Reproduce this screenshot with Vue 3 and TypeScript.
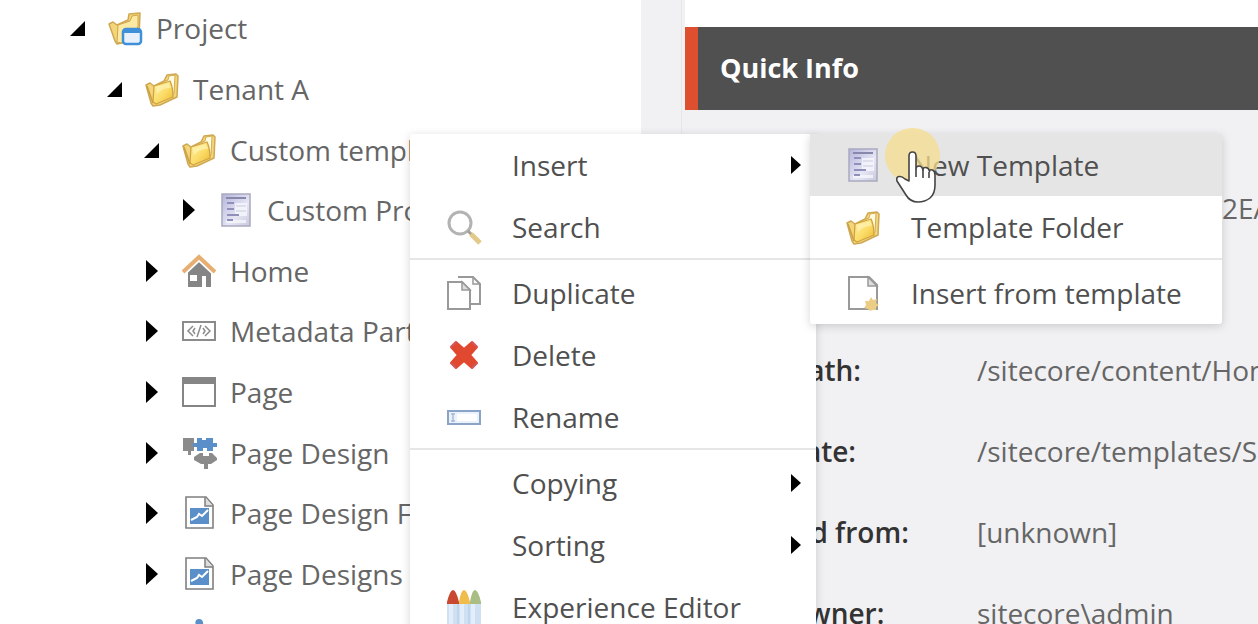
<script setup lang="ts">
interface TreeNode {
  label: string
  depth: number
  icon: string
  open?: boolean
}

interface MenuItem {
  label: string
  icon?: string
  submenu?: boolean
  active?: boolean
}

const nodes: TreeNode[] = [
  { label: 'Project', depth: 0, icon: 'folder-app', open: true },
  { label: 'Tenant A', depth: 1, icon: 'folder', open: true },
  { label: 'Custom templates', depth: 2, icon: 'folder', open: true },
  { label: 'Custom Product', depth: 3, icon: 'template' },
  { label: 'Home', depth: 2, icon: 'home' },
  { label: 'Metadata Partial', depth: 2, icon: 'code' },
  { label: 'Page', depth: 2, icon: 'window' },
  { label: 'Page Design', depth: 2, icon: 'puzzle' },
  { label: 'Page Design Folder', depth: 2, icon: 'design' },
  { label: 'Page Designs', depth: 2, icon: 'design' },
  { label: 'Partial Design', depth: 2, icon: 'piece' },
]

const menuGroups: MenuItem[][] = [
  [{ label: 'Insert', submenu: true }, { label: 'Search', icon: 'search' }],
  [
    { label: 'Duplicate', icon: 'duplicate' },
    { label: 'Delete', icon: 'delete' },
    { label: 'Rename', icon: 'rename' },
  ],
  [
    { label: 'Copying', submenu: true },
    { label: 'Sorting', submenu: true },
    { label: 'Experience Editor', icon: 'crayons' },
  ],
]

const insertGroups: MenuItem[][] = [
  [
    { label: 'New Template', icon: 'template', active: true },
    { label: 'Template Folder', icon: 'folder' },
  ],
  [{ label: 'Insert from template', icon: 'newdoc' }],
]

const menus = [
  { name: 'context', label: 'Item actions', groups: menuGroups },
  { name: 'insert', label: 'Insert', groups: insertGroups },
]

const info = [
  ['Item ID:', '{110D559F-DEA5-42EA-9C1C-8A5DF7E70EF9}'],
  ['Item name:', 'Home'],
  ['Item path:', '/sitecore/content/Home'],
  ['Template:', '/sitecore/templates/Sample/Sample Item'],
  ['Created from:', '[unknown]'],
  ['Item owner:', 'sitecore\\admin'],
]
</script>

<template>
  <svg class="sprites" aria-hidden="true">
    <defs>
      <linearGradient id="gold" x1="0" y1="0" x2="1" y2="1">
        <stop offset="0" stop-color="#fff0a6" />
        <stop offset="0.55" stop-color="#fbdc68" />
        <stop offset="1" stop-color="#e9b92e" />
      </linearGradient>
      <linearGradient id="sheet" x1="0" y1="0" x2="1" y2="1">
        <stop offset="0" stop-color="#b4b4dc" />
        <stop offset="0.6" stop-color="#e6e6f4" />
        <stop offset="1" stop-color="#c8c8dc" />
      </linearGradient>
    </defs>
    <symbol id="folder" viewBox="0 0 36 36">
      <path d="M2 14l4-2 4 3 10-5 3-6 9-1 2 2-1 21-17 8-7 1-2-3z" fill="#f3d67a" stroke="#cfa854" stroke-width="1.5" stroke-linejoin="round" />
      <path d="M21 10l3-1 1-4 6-1-1 19-4 3z" fill="#fffbe4" stroke="#d5ad4c" />
      <path d="M10 15l16-5q3 6 3 16l-17 7-3-2z" fill="url(#gold)" stroke="#d0a343" stroke-width="1.3" stroke-linejoin="round" />
      <path d="M12 16l13-4 2 5q-8-1-14 6z" fill="#fff4b5" opacity=".7" />
      <path d="M3 15l6 17" stroke="#cda044" stroke-width="1.5" />
    </symbol>
    <symbol id="folder-app" viewBox="0 0 36 36">
      <path d="M2 14l4-2 4 3 11-5 1-6 11-1-1 24-17 6-5 1-2-3z" fill="#f3d67a" stroke="#cfa854" stroke-width="1.5" stroke-linejoin="round" />
      <path d="M11 15l12-4 2-5 6-1v12L14 33l-4-1z" fill="#fbe9a4" stroke="#d0a64a" />
      <rect x="16" y="19" width="18" height="15" rx="3" fill="#e8f1fb" stroke="#3f8fd9" stroke-width="2.5" />
      <path d="M16 19h18v4H16z" fill="#3f8fd9" />
    </symbol>
    <symbol id="template" viewBox="0 0 36 36">
      <rect x="4" y="2" width="28" height="32" fill="url(#sheet)" stroke="#a9a9c0" stroke-width="1.5" />
      <path d="M8 6h20" stroke="#8888ac" stroke-width="2" />
      <path d="M17 11h12v13H17zM8 28h20v3H8z" fill="#f6f6fc" opacity=".8" />
      <path d="M9 11h7M9 17h7M9 23h12M9 28h6" stroke="#9090ba" stroke-width="2" />
      <path d="M18 14h10M18 19h10" stroke="#c9c9dd" />
    </symbol>
    <symbol id="home" viewBox="0 0 36 36">
      <path d="M7 17L18 8l12 10v16h-5V23h-4v11H7z" fill="#858585" />
      <path d="M9 22h7v6H9z" fill="#fff" />
      <path d="M2 20L18 5l16 15" fill="none" stroke="#fff" stroke-width="6" />
      <path d="M2 19L18 4l16 15" fill="none" stroke="#e7ae72" stroke-width="4" />
    </symbol>
    <symbol id="code" viewBox="0 0 36 36">
      <rect x="2" y="9" width="32" height="18" fill="#fff" stroke="#8b8b8b" stroke-width="2" />
      <path d="M12 13l-5 5 5 5M24 13l5 5-5 5M20 12l-4 12M14 15l-2 3 2 3M22 15l2 3-2 3" fill="none" stroke="#8b8b8b" stroke-width="1.5" />
    </symbol>
    <symbol id="window" viewBox="0 0 36 36">
      <rect x="2" y="4" width="32" height="28" fill="#fff" stroke="#858585" stroke-width="2" />
      <path d="M1 4h34v6H1z" fill="#858585" />
    </symbol>
    <symbol id="puzzle" viewBox="0 0 36 36">
      <path d="M2 3h11v13h-3v4H7v-4H2z" fill="#8b8b8b" />
      <path d="M16 3h5v2h4V3h7v5h4v4h-4v4h-6v-3h-4v3h-6v-4h-4V8h4z" fill="#5a8fc9" />
      <path d="M19 18h3v3h6v-3h3l5 5v2l-6 4h-3v5h-4v-5h-3l-7-4v-3z" fill="#8b8b8b" />
    </symbol>
    <symbol id="design" viewBox="0 0 36 36">
      <path d="M5 2h20l7 8v23H5z" fill="#fff" stroke="#7f7f7f" stroke-width="1.6" />
      <path d="M24 2v9h8" fill="#ddd" stroke="#7f7f7f" stroke-width="1.5" />
      <path d="M9 13h19v16H9z" fill="#5a8fc9" />
      <path d="M10 25l6-3 2-3 3 2 6-6" fill="none" stroke="#fff" stroke-width="2" />
    </symbol>
    <symbol id="piece" viewBox="0 0 36 36">
      <path d="M15 9q-2-7 3-7t4 7h11v23H4V9z" fill="#5a8fc9" />
    </symbol>
    <symbol id="search" viewBox="0 0 36 36">
      <circle cx="14" cy="14" r="11" fill="#fff" stroke="#b3b3b3" stroke-width="3" />
      <path d="M22 22l4 4" stroke="#a5a08f" stroke-width="3" />
      <path d="M25 25l9 9" stroke="#e2cb8a" stroke-width="5" />
    </symbol>
    <symbol id="duplicate" viewBox="0 0 36 36">
      <path d="M12 2h15l7 7v20h-9" fill="#fff" stroke="#999" stroke-width="2" />
      <path d="M27 2v7h7" fill="none" stroke="#999" stroke-width="1.5" />
      <path d="M2 7h14l8 8v19H2z" fill="#fff" stroke="#999" stroke-width="2" />
      <path d="M16 7v8h8z" fill="#ddd" stroke="#999" stroke-width="1.5" />
    </symbol>
    <symbol id="delete" viewBox="0 0 36 36">
      <path d="M5 10l5-5 8 7 8-7 5 5-7 8 7 8-5 5-8-7-8 7-5-5 7-8z" fill="#e0492f" stroke="#e0492f" stroke-width="2" stroke-linejoin="round" />
      <path d="M5 10l5-5M26 5l5 5M31 26l-5 5M10 31l-5-5" stroke="#cf5a63" stroke-width="2" />
    </symbol>
    <symbol id="rename" viewBox="0 0 36 36">
      <rect x="2" y="12" width="32" height="13" fill="#eaf2fc" stroke="#8ba3c6" stroke-width="2" />
      <path d="M7 14v9M5 15h4M5 22h4" stroke="#a9bad6" stroke-width="1.5" />
      <path d="M11 15h20v7H11z" fill="#fff" />
    </symbol>
    <symbol id="crayons" viewBox="0 0 36 36">
      <path d="M1 13Q4 1 7 1t6 12v4H1z" fill="#c8492f" />
      <path d="M13 13q2-12 5-12t6 12v4H13z" fill="#f0bd4c" />
      <path d="M24 13q2-12 5-12t6 12v4H24z" fill="#a9bd84" />
      <path d="M1 15h34v21H1z" fill="#cfe0f2" />
      <path d="M5 15v21M16 15v21M27 15v21" stroke="#e4eefa" stroke-width="4" />
      <path d="M12 15v21M23 15v21" stroke="#b3cae3" />
    </symbol>
    <symbol id="newdoc" viewBox="0 0 36 36">
      <path d="M4 2h20l8 8v24H4z" fill="#fff" stroke="#999" stroke-width="2" />
      <path d="M23 2v9h9z" fill="#ddd" stroke="#999" stroke-width="1.5" />
      <path d="M26 22l2 3 4-1-1 4 3 2-3 2v3h-4l-2 1-2-2-4-1 2-3-1-4 4 0z" fill="#eccd85" />
    </symbol>
  </svg>

  <main class="editor">
    <nav class="tree" aria-label="Content tree">
      <ul class="nodes">
        <li v-for="node in nodes" :key="node.label" :class="['node', 'depth-' + node.depth]">
          <button class="toggle" :aria-label="'Toggle ' + node.label" :aria-expanded="!!node.open">
            <svg v-if="node.open" class="caret" viewBox="0 0 16 22"><path d="M0 19L15 4v15z" /></svg>
            <svg v-else class="caret" viewBox="0 0 16 22"><path d="M2 0l12 11L2 22z" /></svg>
          </button>
          <a class="node-link" href="#">
            <svg class="icon"><use :href="'#' + node.icon" /></svg>
            <span>{{ node.label }}</span>
          </a>
        </li>
      </ul>
    </nav>

    <section class="content">
      <h2 class="section-title">Quick Info</h2>
      <dl class="info">
        <div v-for="[label, value] in info" :key="label" class="info-row">
          <dt>{{ label }}</dt>
          <dd>{{ value }}</dd>
        </div>
      </dl>
    </section>

    <div v-for="menu in menus" :key="menu.name" :class="['menu', menu.name]" role="menu" :aria-label="menu.label">
      <div v-for="(group, index) in menu.groups" :key="index" class="group" role="group">
        <button v-for="item in group" :key="item.label" :class="['item', { active: item.active }]" role="menuitem">
          <svg v-if="item.icon" class="icon"><use :href="'#' + item.icon" /></svg>
          <span v-else class="icon"></span>
          <span class="item-label">{{ item.label }}</span>
          <svg v-if="item.submenu" class="arrow" viewBox="0 0 10 20"><path d="M0 1l10 9-10 9z" /></svg>
        </button>
      </div>
    </div>

    <div class="pointer" aria-hidden="true">
      <svg class="hand" viewBox="0 0 40 52">
        <path d="M13 30V5q0-4 3.500-4T20 5v13q0-3 3-3t4 4q0-3 3-2.500t3.500 4q.5-2.500 3-1.500t2.500 5v10q0 9-5 13-5 4-12 4-8 0-12-7L1 30q-1-4 2-4.500 3-.5 6 2.500z" fill="#fff" stroke="#444" stroke-width="1.6" stroke-linejoin="round" />
        <path d="M20 18v8M27 19v8M33 21v6" stroke="#444" stroke-width="1.6" fill="none" />
      </svg>
    </div>
  </main>
</template>

<style>
body {
  margin: 0;
  overflow: hidden;
}
</style>

<style scoped>
.sprites {
  position: absolute;
  width: 0;
  height: 0;
}
.editor {
  position: relative;
  display: grid;
  grid-template-columns: 641px 1fr;
  height: 100vh;
  overflow: hidden;
  background: #f1f1f3;
  color: #666;
  font: 28px/40px "Open Sans", "Noto Sans", sans-serif;
}
.tree {
  background: #fff;
  overflow: hidden;
}
.nodes {
  display: grid;
  grid-auto-rows: 1fr;
  height: 667px;
  margin: -2px 0 0;
  padding: 0;
  list-style: none;
}
.node {
  display: flex;
  align-items: center;
  gap: 21px;
  padding-left: 70px;
}
.depth-1 { padding-left: 107px; }
.depth-2 { padding-left: 144px; }
.depth-3 { padding-left: 181px; }
.toggle {
  display: flex;
  padding: 0;
  border: 0;
  background: none;
}
.caret {
  width: 16px;
  height: 22px;
}
.node-link {
  display: flex;
  align-items: center;
  gap: 13px;
  color: inherit;
  text-decoration: none;
  white-space: nowrap;
}
.icon {
  flex: none;
  width: 36px;
  height: 36px;
}
.content {
  min-width: 0;
  margin-left: 40px;
  border-left: 1px solid #e6e6ea;
}
.section-title {
  margin: 0 0 0 3px;
  padding: 21px 22px 22px 35px;
  border-top: 27px solid #fff;
  background: #505050;
  color: #fff;
  font-size: 27px;
  font-weight: 700;
  line-height: 40px;
  box-shadow: inset 13px 0 #dd4f2e;
}
.info {
  margin: 0;
  padding: 78px 0 0 39px;
}
.info-row {
  display: grid;
  grid-template-columns: 256px 1fr;
  margin-bottom: 41px;
  white-space: nowrap;
}
dt {
  color: #333;
  font-weight: 600;
}
dd {
  margin: 0;
}
.menu {
  position: absolute;
  top: 134px;
  background: #fff;
  border-radius: 3px;
  box-shadow: 0 2px 10px rgba(0, 0, 0, 0.17);
}
.context {
  left: 410px;
  width: 406px;
}
.insert {
  left: 810px;
  width: 412px;
}
.group + .group {
  padding-top: 2px;
  border-top: 2px solid #e6e6e6;
}
.item {
  display: flex;
  align-items: center;
  box-sizing: border-box;
  width: 100%;
  height: 62px;
  padding: 0 15px 0 35px;
  border: 0;
  background: none;
  color: #505050;
  font: inherit;
  text-align: left;
}
.context .item {
  padding-left: 36px;
}
.item.active {
  background: #e5e5e5;
}
.item-label {
  flex: 1;
  margin-left: 30px;
  white-space: nowrap;
}
.arrow {
  width: 10px;
  height: 20px;
}
.pointer {
  position: absolute;
  top: 128px;
  left: 885px;
  width: 55px;
  height: 55px;
  border-radius: 50%;
  background: rgba(245, 220, 140, 0.75);
}
.hand {
  position: absolute;
  top: 23px;
  left: 11px;
  width: 40px;
  height: 52px;
}
</style>
